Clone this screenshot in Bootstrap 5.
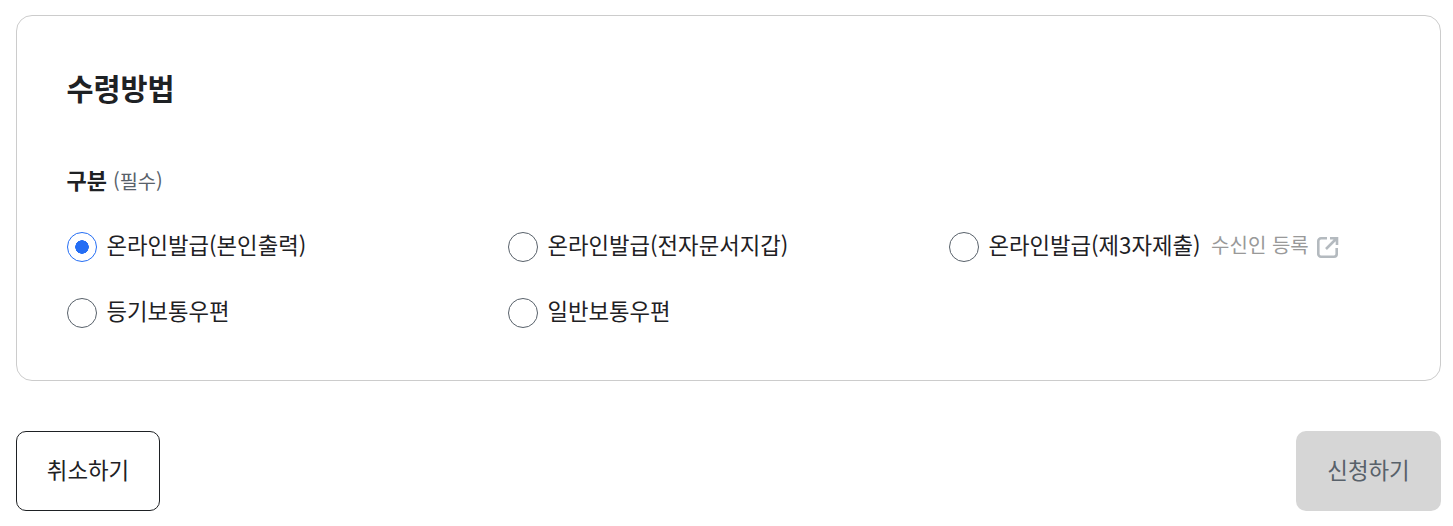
<!DOCTYPE html>
<html lang="ko">
<head>
<meta charset="utf-8">
<title>수령방법</title>
<link href="https://cdn.jsdelivr.net/npm/bootstrap@5.3.0/dist/css/bootstrap.min.css" rel="stylesheet">
<style>
html,body{height:526px;overflow:hidden}
body{background:#fff;color:#1e2124;font-family:"Noto Sans CJK KR","Noto Sans",sans-serif;letter-spacing:0}
.page-wrap{padding:15px 12px 0 16px}
.panel-box{border:1px solid #ccc;border-radius:16px;padding:50px 50px 36px 49.5px;height:366px}
.panel-title{font-size:29.4px;font-weight:700;line-height:42px;margin:0 0 56px;color:#1e2124}
.field-name{font-size:22px;font-weight:700;line-height:30px;margin-bottom:31px;display:flex;align-items:baseline;gap:6px}
.field-req{font-size:19.8px;font-weight:400;color:#58616a}
.opt-grid{display:grid;grid-template-columns:repeat(3,441px);row-gap:26px;padding-left:.5px}
.opt-line{height:40px;display:flex;align-items:center;font-size:22.3px;cursor:pointer;margin:0}
.opt-text{padding-bottom:4px;margin-left:-.5px}
.opt-radio.form-check-input{width:30px;height:30px;margin:0 10px 0 0;border:1px solid #58616a;flex:none;background-color:#fff}
.opt-radio.form-check-input:checked{background-color:#fff;border-color:#256ef4;background-image:radial-gradient(circle,#256ef4 0,#256ef4 6.5px,transparent 7px);background-size:auto}
.reg-link{color:#999;font-size:20px;text-decoration:none;margin-left:10.500px;display:inline-flex;align-items:center;gap:8px}
.reg-label{padding-bottom:4px}
.btn-bar{margin-top:50px}
.act-btn{height:80px;border-radius:10px;font-size:22.4px;padding:0 0 2px;white-space:nowrap;display:flex;align-items:center;justify-content:center}
.act-cancel{width:144px;border:1px solid #1e2124;background:#fff;color:#1e2124}
.act-submit{width:145px;border:0;background:#d6d6d6;color:#58616a}
.act-btn:disabled{opacity:1;background:#d6d6d6;color:#58616a}
</style>
</head>
<body>
<div class="page-wrap">
  <section class="panel-box bg-white">
    <h2 class="panel-title">수령방법</h2>
    <div class="field-name">구분 <span class="field-req">(필수)</span></div>
    <div class="opt-grid">
      <label class="opt-line"><input class="form-check-input opt-radio" type="radio" name="recv" checked><span class="opt-text">온라인발급(본인출력)</span></label>
      <label class="opt-line"><input class="form-check-input opt-radio" type="radio" name="recv"><span class="opt-text">온라인발급(전자문서지갑)</span></label>
      <div class="d-flex align-items-center">
        <label class="opt-line"><input class="form-check-input opt-radio" type="radio" name="recv"><span class="opt-text">온라인발급(제3자제출)</span></label>
        <a class="reg-link" href="#"><span class="reg-label">수신인 등록</span>
          <svg width="22" height="22" viewBox="0 0 22 22" fill="none" stroke="#b4babf" stroke-width="2.6" aria-hidden="true"><path d="M10 2.300H4a2.700 2.700 0 0 0-2.700 2.700v13a2.700 2.700 0 0 0 2.700 2.700h13a2.700 2.700 0 0 0 2.700-2.700V12"/><path d="M13 2.300h7V9M19.500 2.500 9 13"/></svg>
        </a>
      </div>
      <label class="opt-line"><input class="form-check-input opt-radio" type="radio" name="recv"><span class="opt-text">등기보통우편</span></label>
      <label class="opt-line"><input class="form-check-input opt-radio" type="radio" name="recv"><span class="opt-text">일반보통우편</span></label>
    </div>
  </section>
  <div class="btn-bar d-flex justify-content-between">
    <button type="button" class="btn act-btn act-cancel">취소하기</button>
    <button type="button" class="btn act-btn act-submit" disabled>신청하기</button>
  </div>
</div>
<script src="https://cdn.jsdelivr.net/npm/bootstrap@5.3.0/dist/js/bootstrap.bundle.min.js"></script>
</body>
</html>
